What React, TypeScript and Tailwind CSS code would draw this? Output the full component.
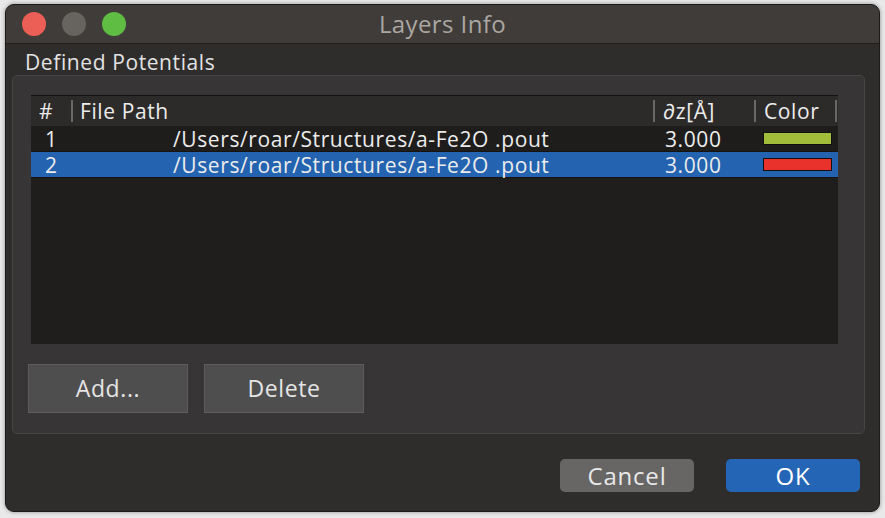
import React from 'react';

const rows = [
  { id: 1, path: '/Users/roar/Structures/a-Fe2O .pout', dz: '3.000', color: 'bg-[#a1bd3a]', selected: false },
  { id: 2, path: '/Users/roar/Structures/a-Fe2O .pout', dz: '3.000', color: 'bg-[#e8322b]', selected: true },
];

const App = () => {
  return (
    <div className="w-[885px] h-[518px] bg-[#e9e9e9] pt-[4px] pl-[5px] font-['Open_Sans',sans-serif]">
      <div className="w-[875px] h-[508px] rounded-[9px] bg-[#2e2d2c] overflow-hidden flex flex-col shadow-[0_0_4px_rgba(0,0,0,0.4)] border border-[#1c1b1a]">
        {/* Title bar */}
        <div className="relative h-[39px] shrink-0 bg-[#403c39] border-b border-[#1f1e1d] flex items-center">
          <div className="flex items-center gap-[16px] pl-[16px]">
            <span className="w-[24px] h-[24px] rounded-full bg-[#ec5f57]" />
            <span className="w-[24px] h-[24px] rounded-full bg-[#67635f]" />
            <span className="w-[24px] h-[24px] rounded-full bg-[#5fbd44]" />
          </div>
          <div className="absolute inset-0 flex items-center justify-center text-[24px] text-[#aaa6a2] tracking-[0.4px]">
            Layers Info
          </div>
        </div>

        {/* Body */}
        <div className="flex-1 flex flex-col px-[6px]">
          <div className="pl-[13px] pt-[4px] h-[31px] text-[21px] text-[#e2e2e2] leading-[28px] tracking-[0.6px]">Defined Potentials</div>

          <div className="h-[359px] mr-[8px] rounded-[5px] bg-[#373535] border border-[#464444] flex flex-col pl-[18px] pr-[26px] pt-[19px]">
            {/* Table */}
            <div className="h-[249px] bg-[#1f1e1d] border-t border-[#141312] flex flex-col text-[21px] tracking-[0.6px] text-[#ececec]">
              <div className="h-[30px] bg-[#2d2b2a] flex items-center">
                <div className="w-[40px] pl-[8px] leading-[22px]">#</div>
                <div className="w-[582px] flex items-center border-l-2 border-[#6a6866] h-[22px] pl-[7px] leading-[22px]">File Path</div>
                <div className="w-[101px] flex items-center border-l-2 border-[#6a6866] h-[22px] pl-[8px] leading-[22px]">∂z[Å]</div>
                <div className="w-[83px] flex items-center border-l-2 border-r-2 border-[#6a6866] h-[22px] pl-[8px] leading-[22px]">Color</div>
              </div>
              {rows.map((r) => (
                <div
                  key={r.id}
                  className={`h-[26px] flex items-center leading-[26px] ${r.selected ? 'bg-[#2363b0]' : 'bg-[#1e1d1c]'} border-b border-[#151413]`}
                >
                  <div className="w-[40px] pl-[14px]">{r.id}</div>
                  <div className="w-[582px] pl-[102px] whitespace-nowrap">{r.path}</div>
                  <div className="w-[101px] pl-[12px]">{r.dz}</div>
                  <div className="w-[83px] pl-[9px] flex items-center">
                    <span className={`w-[69px] h-[13px] ${r.color} border border-[#111]`} />
                  </div>
                </div>
              ))}
            </div>

            {/* Add / Delete */}
            <div className="flex gap-[16px] mt-[20px] -ml-[3px]">
              <button className="w-[160px] h-[49px] bg-[#4f4e4e] border border-[#5e5d5c] text-[23px] tracking-[0.6px] text-[#e4e4e4]">Add...</button>
              <button className="w-[160px] h-[49px] bg-[#4f4e4e] border border-[#5e5d5c] text-[23px] tracking-[0.6px] text-[#e4e4e4]">Delete</button>
            </div>
          </div>

          {/* Footer */}
          <div className="flex justify-end gap-[32px] mt-[25px] pr-[13px]">
            <button className="w-[134px] h-[33px] rounded-[5px] bg-[#676665] text-[24px] tracking-[0.8px] text-[#e8e8e8] leading-[33px]">Cancel</button>
            <button className="w-[134px] h-[33px] rounded-[5px] bg-[#2466b5] text-[24px] tracking-[0.8px] text-white leading-[33px]">OK</button>
          </div>
        </div>
      </div>
    </div>
  );
};

export default App;
